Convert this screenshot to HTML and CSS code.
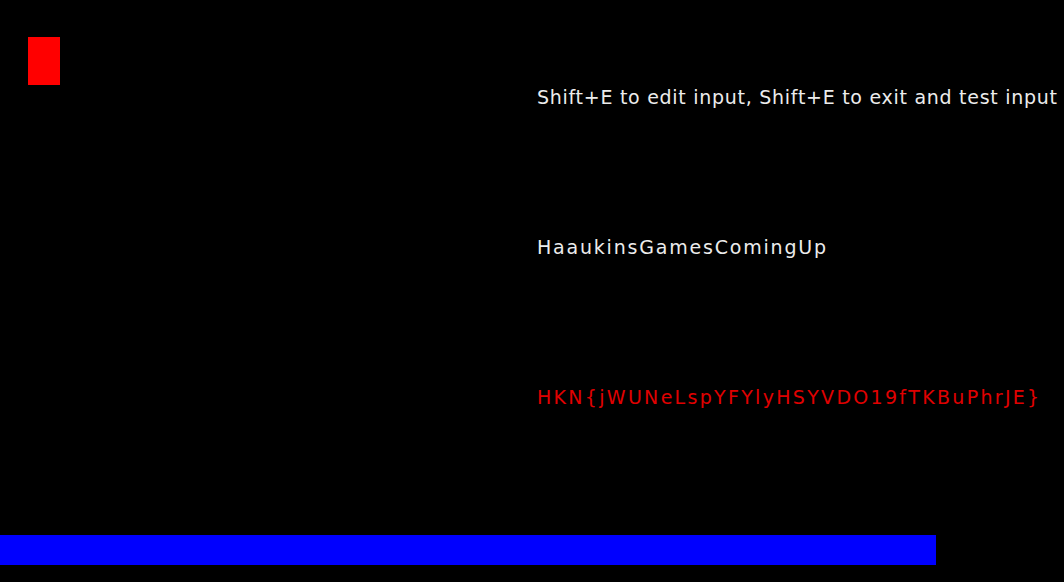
FILE: index.html
```html
<!DOCTYPE html>
<html>
<head>
<meta charset="utf-8">
<link rel="stylesheet" href="styles.css">
</head>
<body>
<div class="screen">
  <div class="top">
    <div class="player"></div>
    <div class="texts">
      <p class="line hint">Shift+E to edit input, Shift+E to exit and test input</p>
      <p class="line name">HaaukinsGamesComingUp</p>
      <p class="line flag">HKN{jWUNeLspYFYlyHSYVDO19fTKBuPhrJE}</p>
    </div>
  </div>
  <div class="bar"></div>
</div>
</body>
</html>
```
FILE: styles.css
```css
html, body {
  margin: 0;
  padding: 0;
  background: #000;
}
.screen {
  width: 1064px;
  height: 582px;
  display: flex;
  flex-direction: column;
  overflow: hidden;
}
.top {
  display: flex;
  height: 535px;
}
.player {
  width: 32px;
  height: 48px;
  margin: 37px 0 0 28px;
  background: #f00;
  flex: none;
}
.texts {
  margin-left: 477px;
  padding-top: 86px;
  display: flex;
  flex-direction: column;
  gap: 128px;
}
.line {
  margin: 0;
  font-family: "DejaVu Sans", sans-serif;
  font-size: 19px;
  line-height: 22px;
  color: #ececec;
  white-space: nowrap;
}
.hint {
  letter-spacing: 0.72px;
}
.name {
  letter-spacing: 1.8px;
}
.flag {
  color: #e00000;
  letter-spacing: 2.3px;
}
.bar {
  width: 936px;
  height: 30px;
  background: #00f;
}
```
